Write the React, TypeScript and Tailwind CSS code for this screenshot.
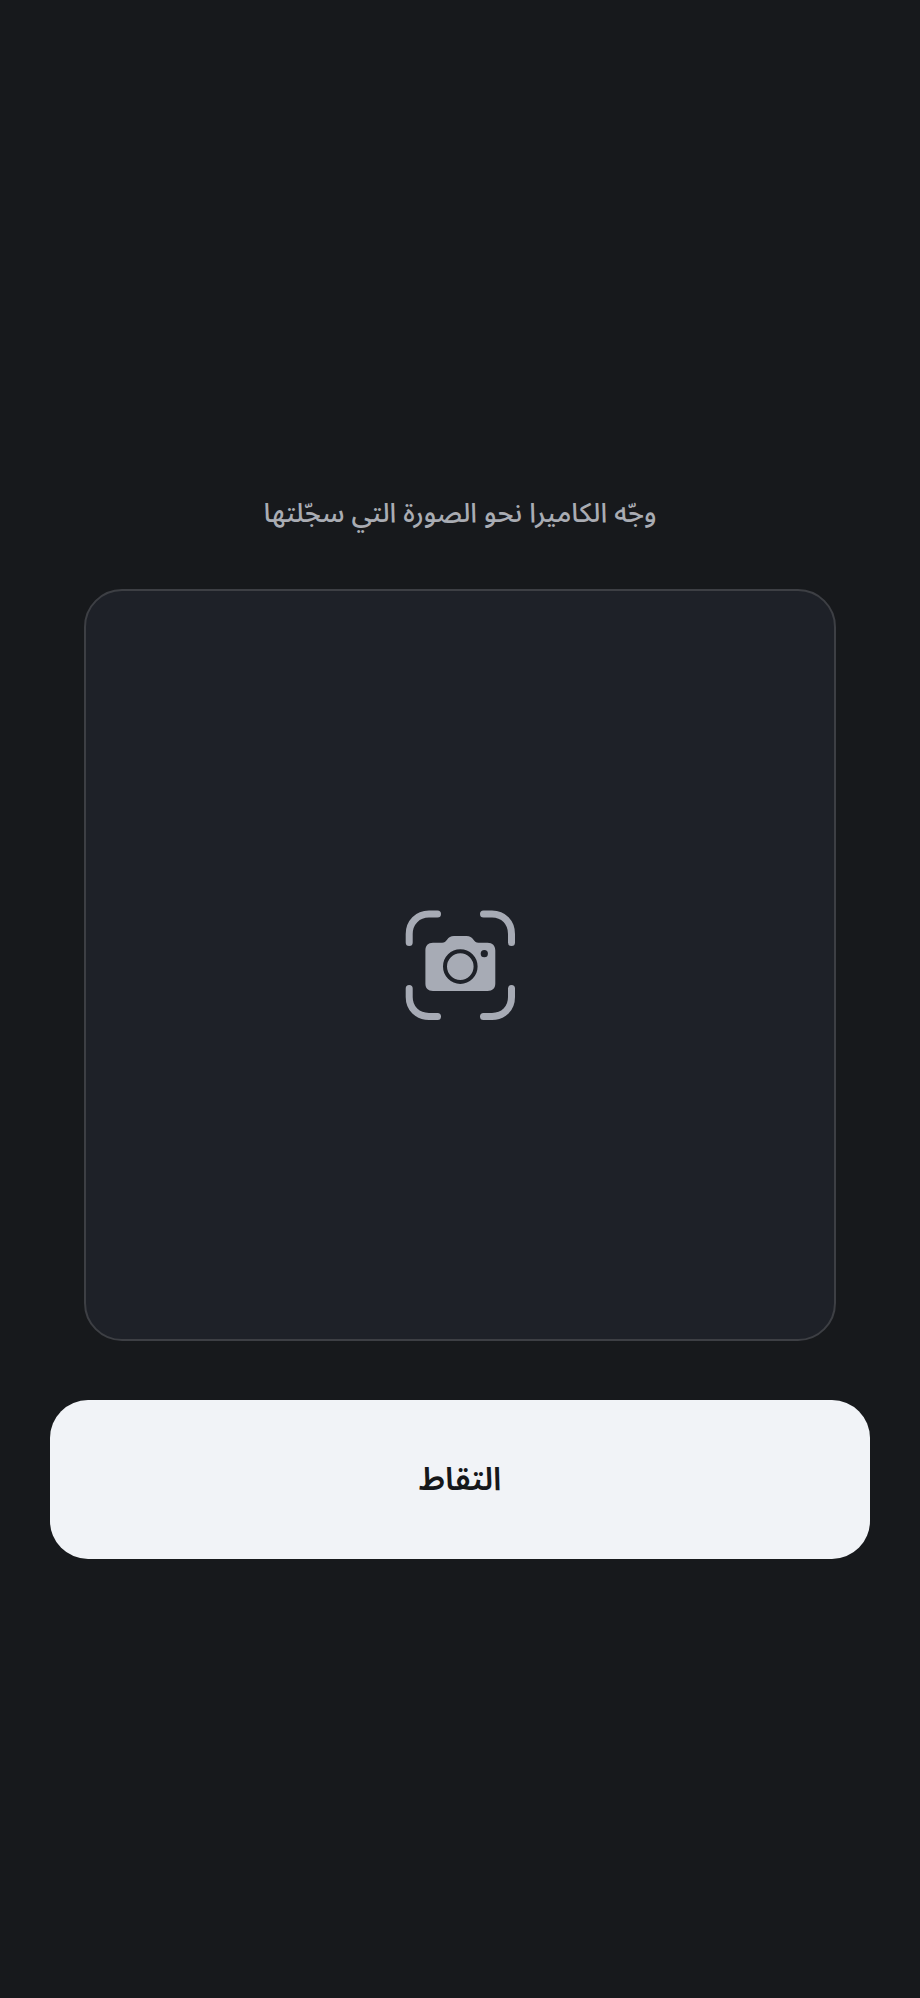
import { useState } from 'react'

function CameraFrameIcon() {
  return (
    <svg viewBox="0 0 110 110" className="size-[110px]" fill="none" aria-hidden="true">
      <g stroke="#a7abb5" strokeWidth="7" strokeLinecap="round">
        <path d="M4.2 32.5V24C4.2 12.5 12.5 4 24 4H32.5" />
        <path d="M78.5 4H87C98.5 4 106.5 12.5 106.5 24V32.5" />
        <path d="M106.5 78.5V87C106.5 98.5 98.5 106.4 87 106.4H78.5" />
        <path d="M32.5 106.4H24C12.5 106.4 4.2 98.5 4.2 87V78.5" />
      </g>
      <path
        fill="#a7abb5"
        d="M28 32.8H37C39.5 32.8 40.5 31.8 42 29.8C44 27.2 45.5 26 49 26H61.5C65 26 66.5 27.2 68.5 29.8C70 31.8 71 32.8 73.5 32.8H82.5C87.5 32.8 90.3 35.8 90.3 40.5V73.5C90.3 78.2 87.5 81 82.5 81H28C23 81 20.4 78.2 20.4 73.5V40.5C20.4 35.8 23 32.8 28 32.8Z"
      />
      <circle cx="55.3" cy="56.6" r="15.3" stroke="#1e2128" strokeWidth="4" />
      <circle cx="79.3" cy="43.7" r="3.6" fill="#1e2128" />
    </svg>
  )
}

function App() {
  const [captured, setCaptured] = useState(false)

  return (
    <main
      dir="rtl"
      lang="ar"
      className="flex min-h-screen flex-col justify-center bg-[#17191c] px-[50px] font-['Noto_Sans','Noto_Sans_Arabic','DejaVu_Sans',sans-serif]"
    >
      <p className="pt-14 pb-[60px] text-center text-[27px] leading-[34px] font-medium text-[#a9acb3]">
        وجّه الكاميرا نحو الصورة التي سجّلتها
      </p>

      {/* Viewfinder */}
      <div className="mx-[34px] flex aspect-square items-center justify-center rounded-[38px] border-2 border-[#3d3f44] bg-[#1e2128]">
        <CameraFrameIcon />
      </div>

      <button
        type="button"
        aria-pressed={captured}
        onClick={() => setCaptured(true)}
        className="mt-[59px] h-[159px] rounded-[38px] bg-[#f1f3f7] pb-1 text-[32px] font-semibold text-[#15171a]"
      >
        التقاط
      </button>
    </main>
  )
}

export default App
